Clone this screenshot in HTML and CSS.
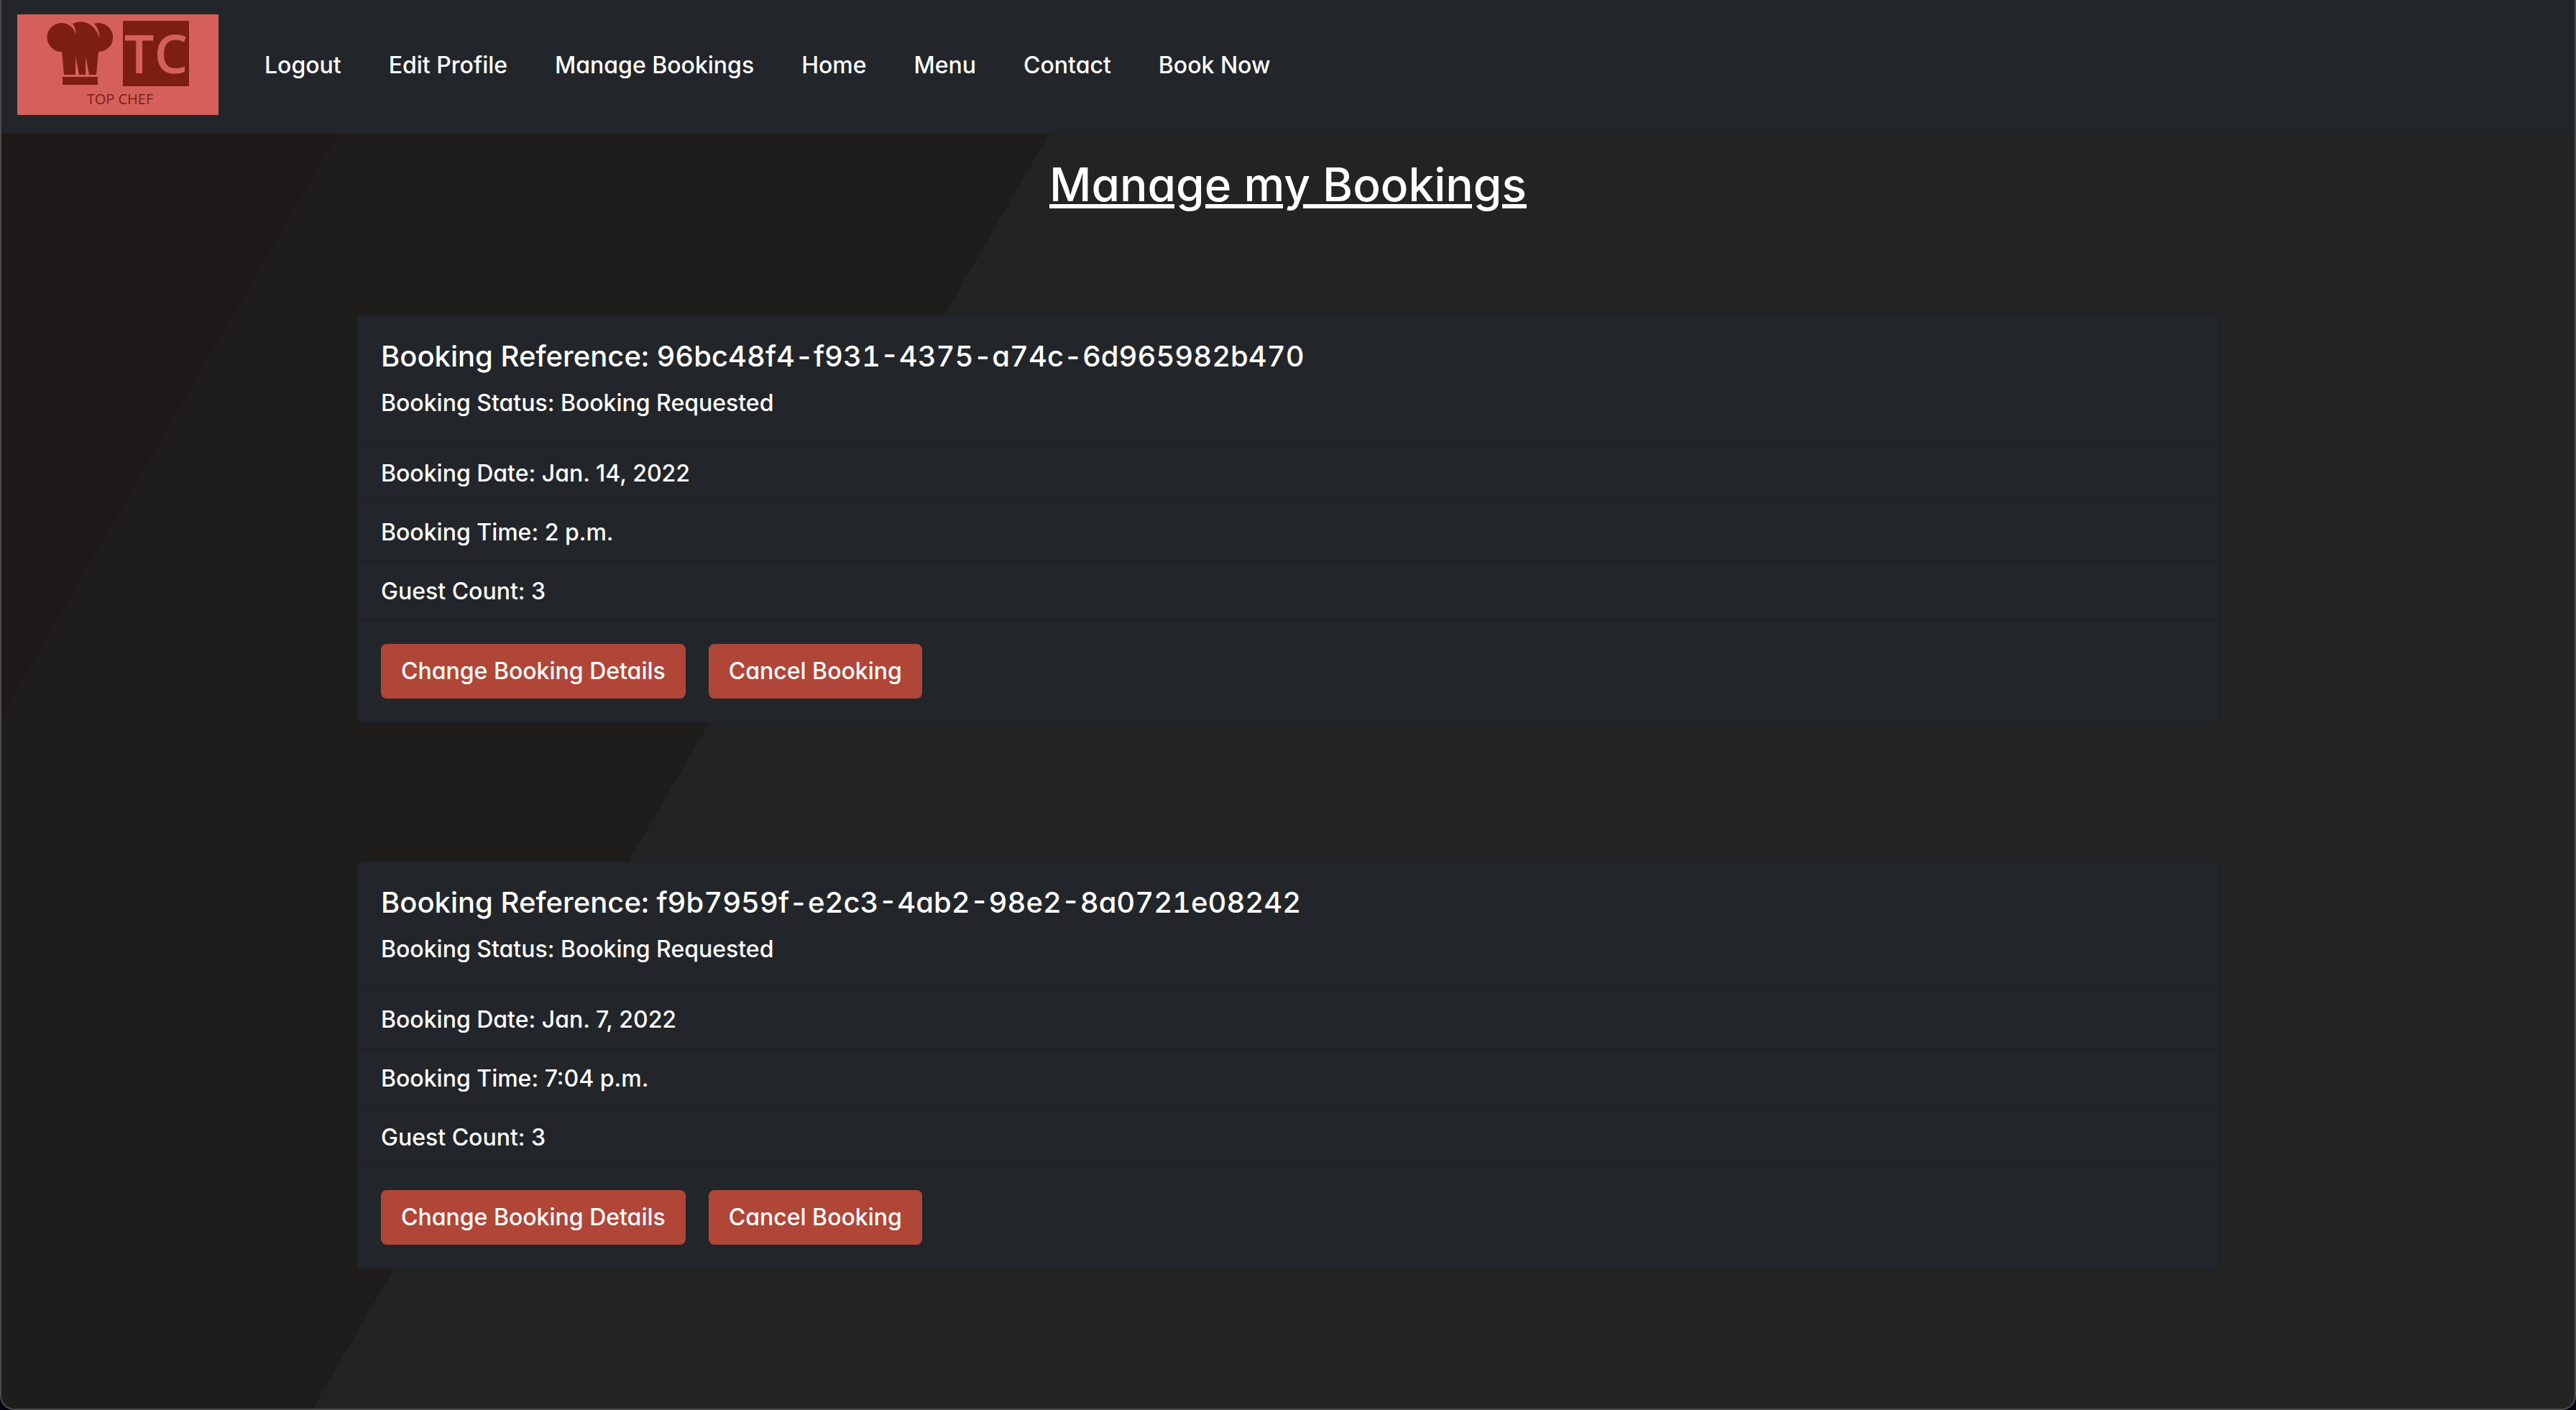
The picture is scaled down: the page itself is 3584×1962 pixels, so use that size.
FILE: index.html
```html
<!DOCTYPE html>
<html lang="en">
<head>
  <meta charset="utf-8">
  <meta name="viewport" content="width=device-width, initial-scale=1">
  <title>Top Chef - Manage my Bookings</title>
  <link rel="stylesheet" href="styles.css">
</head>
<body>
  <div class="page">
    <header class="navbar">
      <a class="brand" href="#" aria-label="Top Chef">
        <svg class="logo" viewBox="0 0 280 140" role="img" aria-label="Top Chef logo">
          <rect class="logo-bg" width="280" height="140"/>
          <g class="logo-ink">
            <path d="M61 12A20 20 0 1 0 62 52L65 84H81V58L86 84H95V58L100 84H110L113 52A20 20 0 1 0 107 13Q114 20 114.500 33Q110 18 98 12.500Q88 8 77 13Q82 19 81.500 29Q77 12 61 12Z"/>
            <rect x="63" y="87" width="49" height="11"/>
            <rect x="147" y="9" width="92" height="91"/>
          </g>
          <text class="logo-mono" x="193" y="82" text-anchor="middle">TC</text>
          <text class="logo-name" x="143" y="125" text-anchor="middle">TOP CHEF</text>
        </svg>
      </a>
      <nav aria-label="Main">
        <ul class="nav-list">
          <li><a href="#">Logout</a></li>
          <li><a href="#">Edit Profile</a></li>
          <li><a href="#">Manage Bookings</a></li>
          <li><a href="#">Home</a></li>
          <li><a href="#">Menu</a></li>
          <li><a href="#">Contact</a></li>
          <li><a href="#">Book Now</a></li>
        </ul>
      </nav>
    </header>
    <main class="container">
      <h1 class="title">Manage my Bookings</h1>
      <div class="bookings">
        <article class="card">
          <div class="card-head">
            <h2>Booking Reference: 96bc48f4-f931-4375-a74c-6d965982b470</h2>
            <p>Booking Status: Booking Requested</p>
          </div>
          <ul class="details">
            <li>Booking Date: Jan. 14, 2022</li>
            <li>Booking Time: 2 p.m.</li>
            <li>Guest Count: 3</li>
          </ul>
          <div class="actions">
            <button type="button" class="btn">Change Booking Details</button>
            <button type="button" class="btn">Cancel Booking</button>
          </div>
        </article>
        <article class="card">
          <div class="card-head">
            <h2>Booking Reference: f9b7959f-e2c3-4ab2-98e2-8a0721e08242</h2>
            <p>Booking Status: Booking Requested</p>
          </div>
          <ul class="details">
            <li>Booking Date: Jan. 7, 2022</li>
            <li>Booking Time: 7:04 p.m.</li>
            <li>Guest Count: 3</li>
          </ul>
          <div class="actions">
            <button type="button" class="btn">Change Booking Details</button>
            <button type="button" class="btn">Cancel Booking</button>
          </div>
        </article>
      </div>
    </main>
  </div>
</body>
</html>
```
FILE: styles.css
```css
*,
*::before,
*::after {
  box-sizing: border-box;
}

html {
  background: #080412;
}

body {
  margin: 0;
  color: #fff;
  font: 500 32px/48px Inter, sans-serif;
  font-feature-settings: "cv11";
}

h1,
h2,
p,
ul {
  margin: 0;
  padding: 0;
}

ul {
  list-style: none;
}

.page {
  min-height: 100vh;
  border: 2px solid #4b4b4a;
  border-top: 0;
  border-radius: 0 0 20px 20px;
  background: linear-gradient(120deg, #1d1918 498px, #1e1d1b 499px, #1e1d1b 1355px, #232323 1356px);
  overflow: hidden;
}

.navbar {
  display: flex;
  align-items: flex-start;
  gap: 64px;
  padding: 20px 22px 26px;
  background: #22262a;
}

.brand,
.logo {
  display: block;
}

.logo {
  width: 280px;
  height: 140px;
}

.logo-bg {
  fill: #d5605b;
}

.logo-ink {
  fill: #7d1e12;
}

.logo-mono {
  fill: #d5605b;
  font: 600 74px "Open Sans", sans-serif;
}

.logo-name {
  fill: #7d1e12;
  font: 400 20px "Open Sans", sans-serif;
}

.nav-list {
  display: flex;
  flex-wrap: wrap;
  gap: 66px;
  padding-top: 47px;
}

.nav-list a {
  color: #fff;
  text-decoration: none;
}

.container {
  max-width: 2640px;
  margin: 0 auto;
  padding: 32px 24px 192px;
}

.title {
  font-size: 64px;
  font-weight: 500;
  line-height: 78px;
  text-align: center;
  text-decoration: underline;
  text-decoration-thickness: 6px;
  text-underline-offset: 4px;
}

.bookings {
  display: grid;
  gap: 192px;
  margin-top: 142px;
}

.card {
  border: 2px solid #1f2124;
  border-radius: 8px;
  background: #22262a;
}

.card-head {
  padding: 32px 32px 31px;
}

.card-head h2 {
  margin-bottom: 17px;
  font-size: 40px;
  font-weight: 500;
  font-feature-settings: "cv11", "tnum";
  line-height: 48px;
}

.details li {
  padding: 17px 32px 15px;
  border-top: 2px solid #1f2124;
}

.actions {
  display: flex;
  flex-wrap: wrap;
  gap: 32px;
  padding: 32px;
  border-top: 2px solid #1f2124;
}

.btn {
  padding: 12px 26px;
  border: 2px solid #b04638;
  border-radius: 8px;
  background: #b04638;
  color: #fff;
  font: inherit;
  font-feature-settings: inherit;
}
```
